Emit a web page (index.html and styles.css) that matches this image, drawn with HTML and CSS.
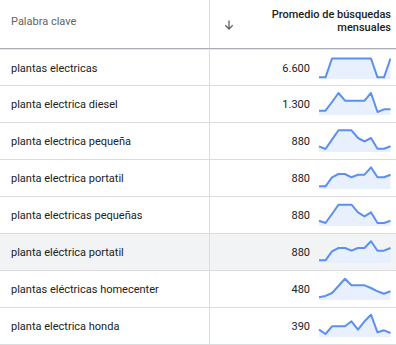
FILE: index.html
```html
<!DOCTYPE html>
<html lang="es">
<head>
<meta charset="utf-8">
<link rel="stylesheet" href="styles.css">
</head>
<body>
<div class="table">
  <div class="head">
    <div class="hcell kw">Palabra clave</div>
    <div class="hcell vol">
      <svg class="sort" width="10" height="10" viewBox="0 0 10 10"><path d="M5 0.5V9M1.3 5.3L5 9l3.7-3.7" fill="none" stroke="#5f6368" stroke-width="1.3"/></svg>
      <span class="htitle">Promedio de búsquedas<br>mensuales</span>
    </div>
  </div>

  <div class="row">
    <div class="cell kw">plantas electricas</div>
    <div class="cell vol"><span class="num">6.600</span>
      <svg class="spark" viewBox="0 0 73 36" width="73" height="36"><polygon class="area" points="1,29 1,27.3 7.5,27.3 14,8.5 20.5,8.5 27,8.5 33.5,8.5 40,8.5 46.5,8.5 53,8.5 59.5,27.3 66,27.3 72.5,8.5 72.5,29"/><polyline class="line" points="1,27.3 7.5,27.3 14,8.5 20.5,8.5 27,8.5 33.5,8.5 40,8.5 46.5,8.5 53,8.5 59.5,27.3 66,27.3 72.5,8.5"/></svg>
    </div>
  </div>

  <div class="row">
    <div class="cell kw">planta electrica diesel</div>
    <div class="cell vol"><span class="num">1.300</span>
      <svg class="spark" viewBox="0 0 73 36" width="73" height="36"><polygon class="area" points="1,29 1,24.7 7.5,24.7 14,16 20.5,7 27,14.7 33.5,14.7 40,14.7 46.5,14.7 53,7 59.5,26 66,23.3 72.5,23.3 72.5,29"/><polyline class="line" points="1,24.7 7.5,24.7 14,16 20.5,7 27,14.7 33.5,14.7 40,14.7 46.5,14.7 53,7 59.5,26 66,23.3 72.5,23.3"/></svg>
    </div>
  </div>

  <div class="row">
    <div class="cell kw">planta electrica pequeña</div>
    <div class="cell vol"><span class="num">880</span>
      <svg class="spark" viewBox="0 0 73 36" width="73" height="36"><polygon class="area" points="1,29 1,23.3 7.5,26 14,16.6 20.5,7.3 27,7.3 33.5,7.3 40,15 46.5,18.3 53,15 59.5,25.7 66,25.7 72.5,23.3 72.5,29"/><polyline class="line" points="1,23.3 7.5,26 14,16.6 20.5,7.3 27,7.3 33.5,7.3 40,15 46.5,18.3 53,15 59.5,25.7 66,25.7 72.5,23.3"/></svg>
    </div>
  </div>

  <div class="row">
    <div class="cell kw">planta electrica portatil</div>
    <div class="cell vol"><span class="num">880</span>
      <svg class="spark" viewBox="0 0 73 36" width="73" height="36"><polygon class="area" points="1,29 1,26.3 7.5,26.3 14,17.3 20.5,14 27,14 33.5,17.3 40,14.7 46.5,14.7 53,7.3 59.5,17.3 66,17.3 72.5,14.7 72.5,29"/><polyline class="line" points="1,26.3 7.5,26.3 14,17.3 20.5,14 27,14 33.5,17.3 40,14.7 46.5,14.7 53,7.3 59.5,17.3 66,17.3 72.5,14.7"/></svg>
    </div>
  </div>

  <div class="row">
    <div class="cell kw">planta electricas pequeñas</div>
    <div class="cell vol"><span class="num">880</span>
      <svg class="spark" viewBox="0 0 73 36" width="73" height="36"><polygon class="area" points="1,29 1,23.7 7.5,26 14,17 20.5,7.7 27,7.7 33.5,7.7 40,15.3 46.5,19.3 53,15.3 59.5,26 66,26 72.5,23.7 72.5,29"/><polyline class="line" points="1,23.7 7.5,26 14,17 20.5,7.7 27,7.7 33.5,7.7 40,15.3 46.5,19.3 53,15.3 59.5,26 66,26 72.5,23.7"/></svg>
    </div>
  </div>

  <div class="row hover">
    <div class="cell kw">planta eléctrica portatil</div>
    <div class="cell vol"><span class="num">880</span>
      <svg class="spark" viewBox="0 0 73 36" width="73" height="36"><polygon class="area" points="1,29 1,26.3 7.5,26.3 14,17.3 20.5,14 27,14 33.5,16.7 40,14 46.5,14 53,7.3 59.5,16.7 66,16.7 72.5,14 72.5,29"/><polyline class="line" points="1,26.3 7.5,26.3 14,17.3 20.5,14 27,14 33.5,16.7 40,14 46.5,14 53,7.3 59.5,16.7 66,16.7 72.5,14"/></svg>
    </div>
  </div>

  <div class="row">
    <div class="cell kw">plantas eléctricas homecenter</div>
    <div class="cell vol"><span class="num">480</span>
      <svg class="spark" viewBox="0 0 73 36" width="73" height="36"><polygon class="area" points="1,29 1,26.3 7.5,24.9 14,22 20.5,15 27,7.7 33.5,14.3 40,14.3 46.5,14.3 53,17 59.5,20.3 66,22.7 72.5,20.3 72.5,29"/><polyline class="line" points="1,26.3 7.5,24.9 14,22 20.5,15 27,7.7 33.5,14.3 40,14.3 46.5,14.3 53,17 59.5,20.3 66,22.7 72.5,20.3"/></svg>
    </div>
  </div>

  <div class="row">
    <div class="cell kw">planta electrica honda</div>
    <div class="cell vol"><span class="num">390</span>
      <svg class="spark" viewBox="0 0 73 36" width="73" height="36"><polygon class="area" points="1,29 1,21.7 7.5,26 14,18.3 20.5,18.3 27,18.3 33.5,13.3 40,21.7 46.5,13.3 53,6.7 59.5,24.3 66,22.3 72.5,25 72.5,29"/><polyline class="line" points="1,21.7 7.5,26 14,18.3 20.5,18.3 27,18.3 33.5,13.3 40,21.7 46.5,13.3 53,6.7 59.5,24.3 66,22.3 72.5,25"/></svg>
    </div>
  </div>
</div>
</body>
</html>
```
FILE: styles.css
```css
html, body {
  margin: 0;
  padding: 0;
  background: #ffffff;
}
body {
  font-family: Roboto, "Liberation Sans", Arial, sans-serif;
  font-size: 11px;
  color: #202124;
  overflow: hidden;
}
.table {
  width: 396px;
}
.head {
  display: grid;
  grid-template-columns: 210px 1fr;
  height: 48px;
  border-bottom: 1px solid #a9adb1;
}
.hcell {
  display: flex;
  align-items: center;
  padding-bottom: 6px;
  box-sizing: border-box;
}
.head .kw {
  padding-left: 11px;
  color: #5f6368;
  border-right: 1px solid #dadce0;
}
.head .vol {
  justify-content: space-between;
  padding-left: 14px;
  padding-right: 5px;
}
.sort {
  margin-top: 8px;
}
.htitle {
  text-align: right;
  font-weight: 500;
  line-height: 13px;
  color: #202124;
}
.row {
  display: grid;
  grid-template-columns: 210px 1fr;
  height: 37px;
  box-sizing: border-box;
  border-bottom: 1px solid #dadce0;
}
.head + .row {
  border-top: 1px solid #e3e5e8;
}
.row.hover {
  background: #f1f3f4;
}
.cell {
  display: flex;
  align-items: center;
}
.cell.kw {
  padding-left: 11px;
  border-right: 1px solid #dadce0;
}
.cell.vol {
  justify-content: flex-end;
  padding-right: 5px;
}
.num {
  color: #202124;
}
.spark {
  display: block;
  margin-left: 8px;
}
.spark .area {
  fill: #e8f0fe;
  stroke: none;
}
.spark .line {
  fill: none;
  stroke: #5b8ff0;
  stroke-width: 2;
  stroke-linejoin: round;
}
```
